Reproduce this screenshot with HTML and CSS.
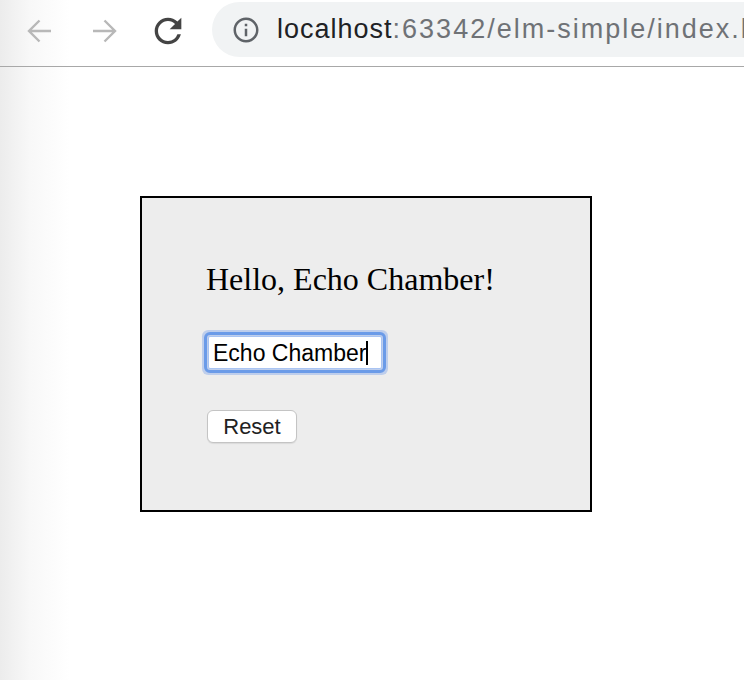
FILE: index.html
```html
<!DOCTYPE html>
<html lang="en">
<head>
  <meta charset="UTF-8" />
  <meta name="viewport" content="width=device-width, initial-scale=1.0"/>
  <title>elm-simple</title>
  <link rel="stylesheet" href="styles.css">
</head>
<body>
<div class="toolbar">
  <div class="nav-btn disabled" aria-label="Back">
    <svg width="28" height="28" viewBox="0 0 28 28"><path d="M25 14H3.5M13.5 3.5L3 14l10.5 10.5" fill="none" stroke="currentColor" stroke-width="2.4"/></svg>
  </div>
  <div class="nav-btn disabled" aria-label="Forward">
    <svg width="28" height="28" viewBox="0 0 28 28"><path d="M3 14h21.5M14.5 3.5L25 14 14.5 24.5" fill="none" stroke="currentColor" stroke-width="2.4"/></svg>
  </div>
  <div class="nav-btn" aria-label="Reload">
    <svg width="40" height="40" viewBox="0 0 24 24"><path d="M17.65 6.35A7.958 7.958 0 0 0 12 4c-4.420 0-7.990 3.58-7.990 8s3.57 8 7.990 8c3.73 0 6.84-2.55 7.73-6h-2.080A5.990 5.990 0 0 1 12 18c-3.310 0-6-2.690-6-6s2.690-6 6-6c1.660 0 3.140.690 4.220 1.780L13 11h7V4l-2.350 2.350z" fill="currentColor"/></svg>
  </div>
  <div class="omnibox">
    <svg class="info-icon" width="30" height="30" viewBox="0 0 24 24"><path d="M11 7h2v2h-2zm0 4h2v6h-2zm1-9C6.48 2 2 6.48 2 12s4.48 10 10 10 10-4.48 10-10S17.52 2 12 2zm0 18c-4.41 0-8-3.59-8-8s3.59-8 8-8 8 3.59 8 8-3.59 8-8 8z" fill="currentColor"/></svg>
    <span class="url"><span class="host">localhost</span><span class="path">:63342/elm-simple/index.html</span></span>
  </div>
</div>

<div class="page">
  <div class="card">
    <h1 class="greeting">Hello, Echo Chamber!</h1>
    <div class="field">
      <input class="name-input" type="text" value="Echo Chamber">
      <span class="caret"></span>
    </div>
    <div>
      <button class="reset-btn">Reset</button>
    </div>
  </div>
</div>
</body>
</html>
```

FILE: styles.css
```css
html, body {
  margin: 0;
  padding: 0;
  height: 100%;
}
body {
  background: linear-gradient(to right, #ececec 0, #f8f8f8 30px, #fff 70px);
  overflow: hidden;
}
.toolbar {
  height: 66px;
  border-bottom: 1px solid #a8a8a8;
  display: flex;
  align-items: flex-start;
  padding-left: 25px;
  font-family: "Liberation Sans", Arial, sans-serif;
}
.nav-btn {
  flex: none;
  width: 30px;
  height: 62px;
  display: flex;
  align-items: center;
  justify-content: center;
  margin-right: 34px;
  color: #444;
}
.nav-btn svg {
  flex: none;
}
.nav-btn.disabled {
  color: #b8b8b8;
}
.omnibox {
  flex: 1;
  min-width: 0;
  height: 55px;
  margin-top: 2px;
  margin-left: -5px;
  background: #f1f3f4;
  border-radius: 28px 0 0 28px;
  display: flex;
  align-items: center;
  padding-left: 19px;
  white-space: nowrap;
  overflow: hidden;
}
.info-icon {
  flex: none;
  color: #5f6368;
  margin-right: 16px;
}
.url {
  flex: none;
  font-size: 27px;
}
.host {
  color: #202124;
  letter-spacing: 1px;
}
.path {
  color: #6f7276;
  letter-spacing: 2px;
}

.page {
  padding: 129px 0 0 140px;
}
.card {
  width: 384px;
  height: 248px;
  padding: 64px 0 0 64px;
  background: #ededed;
  border: 2px solid #000;
  box-sizing: content-box;
}
.greeting {
  margin: -1px 0 0 0;
  font-family: "Liberation Serif", "Times New Roman", serif;
  font-weight: normal;
  font-size: 32px;
  line-height: 36px;
  color: #000;
}
.field {
  position: relative;
  width: 174px;
  margin: 39px 0 0 2px;
}
.name-input {
  display: block;
  width: 174px;
  height: 33px;
  box-sizing: border-box;
  padding: 1px 4px 0;
  font-family: "Liberation Sans", Arial, sans-serif;
  font-size: 23px;
  color: #000;
  background: #fff;
  border: 1px solid #a9c4f3;
  border-radius: 2px;
  outline: 3px solid #6b9be8;
  outline-offset: 1px;
  box-shadow: 0 0 0 6px rgba(120, 160, 235, 0.4);
}
/* каретка поверх поля */
.caret {
  position: absolute;
  left: 158px;
  top: 5px;
  width: 2px;
  height: 24px;
  background: #000;
}
.reset-btn {
  margin: 41px 0 0 1px;
  width: 90px;
  height: 33px;
  font-family: "Liberation Sans", Arial, sans-serif;
  font-size: 22px;
  color: #222;
  background: #fff;
  border: 1px solid #c4c4c4;
  border-radius: 6px;
  box-shadow: 0 1px 1px rgba(0, 0, 0, 0.08);
  padding: 0;
}
```
